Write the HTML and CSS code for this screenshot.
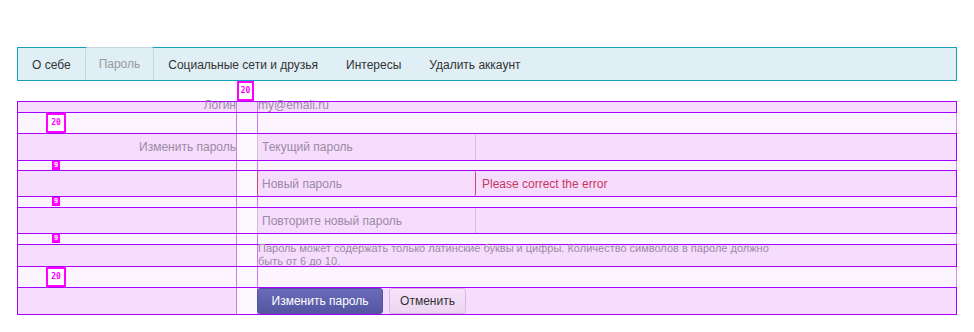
FILE: index.html
```html
<!DOCTYPE html>
<html lang="ru">
<head>
  <meta charset="UTF-8" />
  <meta name="viewport" content="width=device-width, initial-scale=1" />
  <title>Настройки профиля</title>
  <link rel="stylesheet" href="styles.css">
</head>
<body>
  <div class="page">
    <nav class="tabs">
      <a class="tab" href="#">О себе</a>
      <a class="tab tab-active" href="#">Пароль</a>
      <a class="tab" href="#">Социальные сети и друзья</a>
      <a class="tab" href="#">Интересы</a>
      <a class="tab" href="#">Удалить аккаунт</a>
    </nav>

    <div class="top-gap">
      <span class="badge badge-top">20</span>
    </div>

    <form class="form">
      <div class="row row-login">
        <div class="label">Логин</div>
        <div class="gutter"></div>
        <div class="value">my@email.ru</div>
      </div>

      <div class="spacer h20">
        <div class="label"><span class="badge">20</span></div>
        <div class="gutter"></div>
        <div class="value"></div>
      </div>

      <div class="row h28">
        <div class="label">Изменить пароль</div>
        <div class="gutter"></div>
        <div class="value"><input class="field" type="password" placeholder="Текущий пароль" /></div>
      </div>

      <div class="spacer h9">
        <div class="label"><span class="badge badge-small">9</span></div>
        <div class="gutter"></div>
        <div class="value"></div>
      </div>

      <div class="row h27">
        <div class="label"></div>
        <div class="gutter"></div>
        <div class="value">
          <input class="field field-error" type="password" placeholder="Новый пароль" />
          <span class="error">Please correct the error</span>
        </div>
      </div>

      <div class="spacer h10">
        <div class="label"><span class="badge badge-small">9</span></div>
        <div class="gutter"></div>
        <div class="value"></div>
      </div>

      <div class="row h27">
        <div class="label"></div>
        <div class="gutter"></div>
        <div class="value"><input class="field" type="password" placeholder="Повторите новый пароль" /></div>
      </div>

      <div class="spacer h10">
        <div class="label"><span class="badge badge-small">9</span></div>
        <div class="gutter"></div>
        <div class="value"></div>
      </div>

      <div class="row h23">
        <div class="label"></div>
        <div class="gutter"></div>
        <div class="value">
          <p class="hint">Пароль может содержать только латинские буквы и цифры. Количество символов в пароле должно быть от 6 до 10.</p>
        </div>
      </div>

      <div class="spacer h20">
        <div class="label"><span class="badge">20</span></div>
        <div class="gutter"></div>
        <div class="value"></div>
      </div>

      <div class="row h28">
        <div class="label"></div>
        <div class="gutter"></div>
        <div class="value actions">
          <button class="btn btn-primary" type="submit">Изменить пароль</button>
          <button class="btn btn-cancel" type="button">Отменить</button>
        </div>
      </div>
    </form>
  </div>
</body>
</html>
```

FILE: styles.css
```css
body {
  margin: 0;
  font-family: "Liberation Sans", Arial, sans-serif;
  font-size: 12px;
  color: #333;
  background: #fff;
}
.page {
  width: 940px;
  margin: 47px 0 0 17px;
}

/* tabs */
.tabs {
  display: flex;
  height: 34px;
  box-sizing: border-box;
  border: 1px solid #14a2bf;
  background-color: #e0eff6;
}
.tab {
  display: block;
  padding: 0 13px;
  line-height: 32px;
  color: #333;
  text-decoration: none;
  border: 1px solid transparent;
  border-bottom: none;
}
.tab-active {
  color: #999;
  border-color: #c6d7df;
  border-radius: 3px 3px 0 0;
  margin-top: -1px;
  line-height: 33px;
}

/* overlay gap */
.top-gap {
  height: 20px;
  box-sizing: border-box;
  padding-left: 220px;
  line-height: 0;
}
.badge {
  display: inline-block;
  box-sizing: border-box;
  width: 20px;
  height: 20px;
  border: 2px solid #f0f;
  background: #fff;
  color: #f0f;
  font-family: "DejaVu Sans Mono", monospace;
  font-weight: bold;
  font-size: 8px;
  line-height: 16px;
  text-align: center;
}
.badge-top {
  width: 17px;
}
.badge-small {
  width: 8px;
  height: 9px;
  border: none;
  background: #f0f;
  color: #fff;
  font-size: 7px;
  line-height: 9px;
}

/* form rows */
.form {
  margin: 0;
}
.row, .spacer {
  display: flex;
  box-sizing: border-box;
  border-left: 1px solid #a600ff;
  border-right: 1px solid #a600ff;
}
.row {
  border-top: 1px solid #a600ff;
  border-bottom: 1px solid #a600ff;
  background-color: #f6ddfe;
}
.spacer {
  background-color: #fcf4fe;
  border-right-color: #d48af8;
}
.h9 { height: 9px; }
.h10 { height: 10px; }
.h20 { height: 20px; }
.h23 { height: 23px; }
.h27 { height: 27px; }
.h28 { height: 28px; }

.label {
  width: 219px;
  flex: none;
  box-sizing: border-box;
  border-right: 1px solid #c77cf4;
  text-align: right;
  color: #9b8aa3;
  line-height: 26px;
  white-space: nowrap;
}
.spacer .label {
  text-align: left;
  line-height: 0;
}
.spacer.h20 .label {
  padding-left: 28px;
}
.spacer.h9 .label, .spacer.h10 .label {
  padding-left: 34px;
}
.gutter {
  width: 20px;
  flex: none;
  background-color: #fdf8fe;
}
.value {
  flex: 1;
  display: flex;
  align-items: center;
  border-left: 1px solid #c77cf4;
  color: #9b8aa3;
}

.row-login {
  height: 12px;
}
.row-login .label, .row-login .value {
  line-height: 7px;
  align-items: flex-start;
}
.row-login .gutter {
  background-color: transparent;
}

.field {
  width: 219px;
  height: 26px;
  box-sizing: border-box;
  margin: 0 0 0 -1px;
  padding: 0 4px;
  border: 1px solid #d2c0d9;
  border-top: none;
  border-bottom: none;
  background: transparent;
  font-family: "Liberation Sans", Arial, sans-serif;
  font-size: 12px;
  color: #333;
  outline: none;
}
.h27 .field {
  height: 25px;
}
.field::placeholder {
  color: #9b8aa3;
}
.field-error {
  border-color: #c94b6a;
  border-radius: 2px;
}
.error {
  margin-left: 6px;
  color: #c8365a;
}

.hint {
  margin: -2px 0 0;
  width: 530px;
  font-size: 11px;
  line-height: 13px;
  color: #9b8aa3;
}

.actions {
  gap: 6px;
  align-items: flex-start;
}
.btn {
  height: 26px;
  padding: 0;
  border-radius: 3px;
  font-family: "Liberation Sans", Arial, sans-serif;
  font-size: 12px;
  white-space: nowrap;
  cursor: pointer;
}
.btn-primary {
  width: 126px;
  margin-left: -1px;
  border: 1px solid #5253a0;
  background: linear-gradient(#6a6cbb, #5456a0);
  color: #fff;
}
.btn-cancel {
  width: 77px;
  border: 1px solid #d6b9df;
  background: linear-gradient(#f6e4fa, #ecd6f2);
  color: #333;
}
```
